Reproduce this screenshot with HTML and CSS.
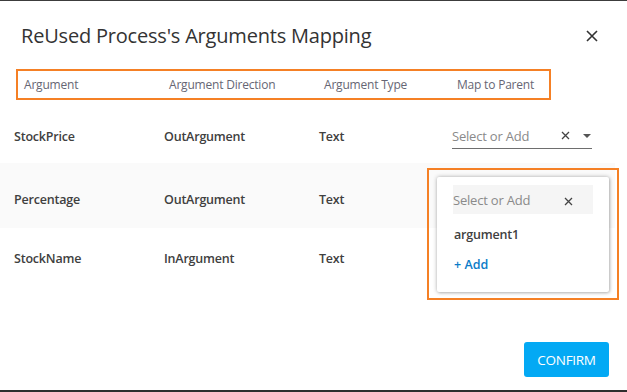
FILE: index.html
```html
<!DOCTYPE html>
<html>
<head>
<meta charset="utf-8">
<link rel="stylesheet" href="styles.css">
</head>
<body>
<div class="dialog">
  <div class="title-bar">
    <h1 class="title">ReUsed Process's Arguments Mapping</h1>
    <span class="close">
      <svg width="12" height="12" viewBox="0 0 12 12"><path d="M1 1 L11 11 M11 1 L1 11" stroke="#333" stroke-width="1.6" fill="none"/></svg>
    </span>
  </div>
  <div class="head-row">
    <span>Argument</span>
    <span>Argument Direction</span>
    <span>Argument Type</span>
    <span>Map to Parent</span>
  </div>
  <div class="rows">
    <div class="row r1">
      <span>StockPrice</span>
      <span>OutArgument</span>
      <span>Text</span>
      <div class="select">
        <span class="ph">Select or Add</span>
        <span class="x">
          <svg width="9" height="9" viewBox="0 0 9 9"><path d="M1 1 L8 8 M8 1 L1 8" stroke="#444" stroke-width="1.3" fill="none"/></svg>
        </span>
        <span class="caret"></span>
      </div>
    </div>
    <div class="row r2">
      <span>Percentage</span>
      <span>OutArgument</span>
      <span>Text</span>
      <span></span>
    </div>
    <div class="row r3">
      <span>StockName</span>
      <span>InArgument</span>
      <span>Text</span>
      <span></span>
    </div>
  </div>
  <div class="footer">
    <button class="confirm">CONFIRM</button>
  </div>

  <div class="popup-mark">
    <div class="popup">
      <div class="search">
        <span class="ph">Select or Add</span>
        <span class="x">
          <svg width="9" height="9" viewBox="0 0 9 9"><path d="M1 1 L8 8 M8 1 L1 8" stroke="#444" stroke-width="1.3" fill="none"/></svg>
        </span>
      </div>
      <div class="option">argument1</div>
      <div class="add">+ Add</div>
    </div>
  </div>
</div>
</body>
</html>
```
FILE: styles.css
```css
html, body {
  margin: 0;
  padding: 0;
}
body {
  width: 627px;
  height: 392px;
  box-sizing: border-box;
  border-top: 1px solid #3c3c3c;
  border-bottom: 2px solid #2e2e2e;
  background: #fff;
  font-family: "Open Sans", "Noto Sans", sans-serif;
  color: #333;
  overflow: hidden;
}
.dialog {
  position: relative;
  height: 389px;
  display: flex;
  flex-direction: column;
}
.title-bar {
  display: flex;
  align-items: center;
  justify-content: space-between;
  padding: 19px 29px 0 21px;
  height: 31px;
}
.title {
  margin: 0;
  font-size: 20px;
  font-weight: 400;
  color: #333;
  letter-spacing: -0.2px;
}
.close {
  display: flex;
  margin-top: 1px;
}
.head-row {
  margin: 18px 0 0 16px;
  width: 535px;
  height: 31px;
  box-sizing: border-box;
  border: 2px solid #f58025;
  display: grid;
  grid-template-columns: 145px 155px 133px auto;
  align-items: center;
  padding: 0 0 0 6px;
  font-size: 12px;
  color: #666674;
  letter-spacing: -0.2px;
}
.rows {
  display: flex;
  flex-direction: column;
  width: 615px;
}
.row {
  display: grid;
  grid-template-columns: 150px 155px 133px 140px;
  align-items: center;
  padding-left: 14px;
  font-size: 12.5px;
  font-weight: 600;
  color: #404040;
  letter-spacing: -0.2px;
}
.r1 { height: 63px; padding-top: 9px; box-sizing: border-box; }
.r2 { height: 65px; background: #fafafa; padding-top: 7px; box-sizing: border-box; }
.r3 { height: 60px; padding-top: 0px; box-sizing: border-box; }
.select {
  display: flex;
  align-items: center;
  height: 25px;
  border-bottom: 1px solid #6e6e6e;
  margin-top: 0px;
}
.ph {
  font-weight: 400;
  color: #8a8a8a;
  font-size: 13px;
  letter-spacing: -0.2px;
  flex: 1;
}
.select .x {
  display: flex;
  margin-right: 13px;
}
.caret {
  width: 0;
  height: 0;
  border-left: 4px solid transparent;
  border-right: 4px solid transparent;
  border-top: 4px solid #555;
  margin-right: 1px;
}
.footer {
  flex: 1;
  display: flex;
  justify-content: flex-end;
  align-items: flex-start;
  padding: 54px 18px 0 0;
}
.confirm {
  width: 85px;
  height: 35px;
  border: none;
  border-radius: 3px;
  background: #03a9f4;
  color: #fff;
  font-family: "Open Sans", "Noto Sans", sans-serif;
  font-size: 13.5px;
  letter-spacing: -0.3px;
  padding: 0;
}
.popup-mark {
  position: absolute;
  left: 427px;
  top: 167px;
  width: 192px;
  height: 132px;
  box-sizing: border-box;
  border: 2px solid #f58025;
  padding: 7px 8px 0 8px;
}
.popup {
  width: 172px;
  height: 115px;
  box-sizing: border-box;
  background: #fff;
  border-radius: 2px;
  box-shadow: 0 0 4px rgba(0,0,0,0.3), 1px 1px 3px rgba(0,0,0,0.15);
  padding: 8px 16px 0 16px;
}
.search {
  display: flex;
  align-items: center;
  height: 29px;
  background: #f5f5f5;
  padding-right: 20px;
}
.option {
  font-size: 12.5px;
  font-weight: 600;
  color: #404040;
  letter-spacing: -0.2px;
  margin-top: 12px;
  padding-left: 1px;
}
.add {
  font-size: 12.5px;
  font-weight: 600;
  color: #0a7bc8;
  margin-top: 13px;
  padding-left: 1px;
}
```
